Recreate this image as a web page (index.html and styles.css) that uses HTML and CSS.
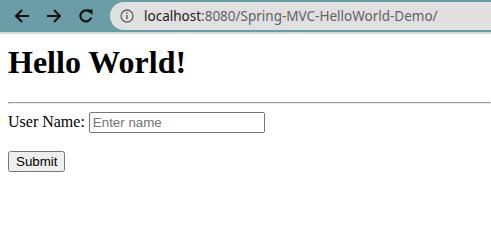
FILE: index.html
```html
<!DOCTYPE html>
<html lang="en">
<head>
    <meta charset="UTF-8">
    <title>Spring MVC Hello World</title>
    <link rel="stylesheet" href="styles.css">
</head>
<body>
    <!-- browser toolbar -->
    <div class="toolbar">
        <span class="nav-btn">
            <svg width="16" height="16" viewBox="0 0 16 16"><path d="M15 8H2.5M8 2L2 8l6 6" fill="none" stroke="#111" stroke-width="2"/></svg>
        </span>
        <span class="nav-btn">
            <svg width="16" height="16" viewBox="0 0 16 16"><path d="M1 8h12.5M8 2l6 6-6 6" fill="none" stroke="#111" stroke-width="2"/></svg>
        </span>
        <span class="nav-btn">
            <svg width="16" height="16" viewBox="0 0 16 16"><path d="M13.2 9.5A5.5 5.5 0 1 1 12 4.2" fill="none" stroke="#111" stroke-width="2.2"/><path d="M9 1.5h5.5V7z" fill="#111"/></svg>
        </span>
        <div class="address">
            <svg class="info" width="14" height="14" viewBox="0 0 14 14"><circle cx="7" cy="7" r="6" fill="none" stroke="#5f6368" stroke-width="1.3"/><rect x="6.3" y="6" width="1.4" height="4.2" fill="#5f6368"/><rect x="6.3" y="3.6" width="1.4" height="1.4" fill="#5f6368"/></svg>
            <span class="host">localhost</span><span class="path">:8080/Spring-MVC-HelloWorld-Demo/</span>
        </div>
    </div>

    <div class="page">
        <h1>Hello World!</h1>
        <hr>
        <form>
            User Name: <input type="text" name="name" placeholder="Enter name">
            <br><br>
            <input type="submit" value="Submit">
        </form>
    </div>
</body>
</html>
```

FILE: styles.css
```css
body {
    margin: 0;
    font-family: "Liberation Serif", "Times New Roman", serif;
    font-size: 16px;
    color: #000;
    background: #fff;
}
.toolbar {
    height: 32px;
    background-color: #6a9da5;
    border-bottom: 2px solid #d3dcdd;
    display: flex;
    align-items: center;
    padding-left: 14px;
}
.nav-btn {
    width: 16px;
    height: 16px;
    margin-right: 16px;
    display: flex;
}
.address {
    flex: 1;
    height: 28px;
    margin-right: -20px;
    background-color: #e0e0e0;
    border-radius: 14px;
    display: flex;
    align-items: center;
    padding-left: 10px;
    font-family: "Noto Sans", "Open Sans", sans-serif;
    font-size: 13.5px;
}
.info {
    margin-right: 10px;
}
.host {
    color: #202124;
}
.path {
    color: #5f6368;
}
.page {
    margin: 0 0 0 8px;
}
h1 {
    font-size: 32px;
    margin: 10px 0 21px;
}
hr {
    margin: 0 0 8px;
}
input[type="text"] {
    font-family: "Liberation Sans", Arial, sans-serif;
    font-size: 13.33px;
    width: 168px;
}
input[type="submit"] {
    font-family: "Liberation Sans", Arial, sans-serif;
    font-size: 13.33px;
}
```
